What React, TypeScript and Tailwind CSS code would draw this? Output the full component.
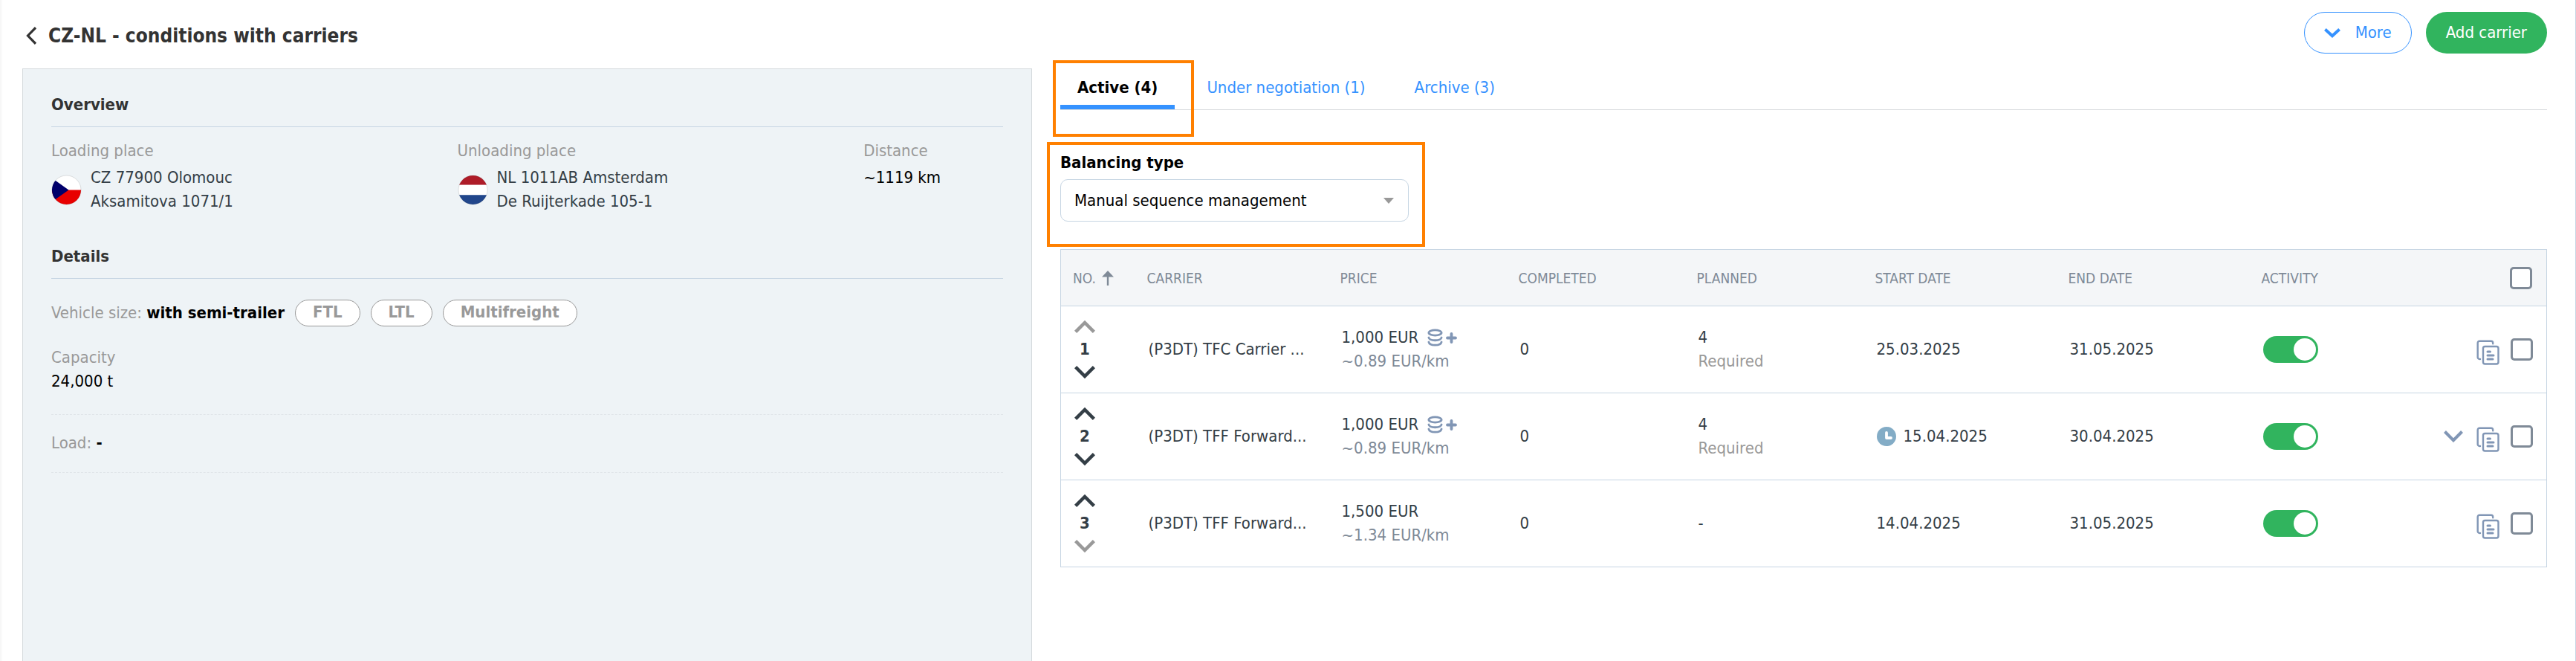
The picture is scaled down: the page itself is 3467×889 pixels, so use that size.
import React from "react";

const CHECK =
  "block h-[30px] w-[30px] shrink-0 appearance-none rounded-[5px] border-3 border-[#7f8a97] bg-white";

function Chevron({ dir, className }: { dir: "up" | "down"; className: string }) {
  return (
    <svg viewBox="0 0 28 17" className={className} fill="none" stroke="currentColor" strokeWidth="4.5" aria-hidden="true">
      <path d={dir === "up" ? "M1.6 15.4 14 3l12.4 12.4" : "M1.6 1.6 14 14 26.4 1.6"} />
    </svg>
  );
}

function Coins() {
  return (
    <svg viewBox="0 0 40 24" className="h-6 w-10 text-[#8196b5]" fill="none" stroke="currentColor" strokeWidth="2.8" strokeLinecap="round" aria-hidden="true">
      <ellipse cx="10.5" cy="5.5" rx="8.6" ry="3.6" />
      <path d="M1.9 12c1.2 5 16 5 17.200 0M1.900 18c1.200 5.600 16 5.600 17.200 0" />
      <path d="M32.500 7v11M27 12.500h11" strokeWidth="3.8" />
    </svg>
  );
}

function CopyIcon() {
  return (
    <svg viewBox="0 0 32 34" className="h-[34px] w-8" fill="none" stroke="#8196b5" strokeWidth="2.4" strokeLinecap="round" aria-hidden="true">
      <path d="M5 26H4.200a2.500 2.500 0 0 1-2.500-2.500V4.200a2.500 2.500 0 0 1 2.500-2.500h15.500a2.500 2.500 0 0 1 2.500 2.500v1" />
      <rect x="9" y="9" width="20.500" height="23.500" rx="2.500" />
      <path d="M15 16h3.500M15 21h8M15 26h7" strokeWidth="3" />
    </svg>
  );
}

function Place({ label, lines, flag }: { label: string; lines: string[]; flag: React.ReactNode }) {
  return (
    <div>
      <p className="text-[#999999]">{label}</p>
      <div className="mt-1 flex items-center gap-3">
        {flag}
        <p>
          {lines[0]}
          <br />
          {lines[1]}
        </p>
      </div>
    </div>
  );
}

function CzechFlag() {
  return (
    <svg viewBox="0 0 42 42" className="h-[41px] w-[41px]" role="img" aria-label="Czech Republic">
      <clipPath id="cz"><circle cx="21" cy="21" r="20" /></clipPath>
      <g clipPath="url(#cz)">
        <path fill="#fff" d="M0 0h42v21H0z" />
        <path fill="#e80000" d="M0 21h42v21H0z" />
        <path fill="#00006b" d="M0 4 24 21 0 38z" />
      </g>
      <circle cx="21" cy="21" r="20" fill="none" stroke="#000" strokeOpacity=".12" />
    </svg>
  );
}

function DutchFlag() {
  return (
    <svg viewBox="0 0 42 42" className="h-[41px] w-[41px]" role="img" aria-label="Netherlands">
      <clipPath id="nl"><circle cx="21" cy="21" r="20" /></clipPath>
      <g clipPath="url(#nl)">
        <path fill="#ae1c28" d="M0 0h42v14H0z" />
        <path fill="#fff" d="M0 14h42v14H0z" />
        <path fill="#21468b" d="M0 28h42v14H0z" />
      </g>
      <circle cx="21" cy="21" r="20" fill="none" stroke="#000" strokeOpacity=".12" />
    </svg>
  );
}

type Row = {
  no: number;
  carrier: string;
  price: string;
  perKm: string;
  extra: boolean;
  planned: string;
  required: boolean;
  start: string;
  scheduled: boolean;
  end: string;
};

const ROWS: Row[] = [
  { no: 1, carrier: "(P3DT) TFC Carrier ...", price: "1,000 EUR", perKm: "~0.89 EUR/km", extra: true, planned: "4", required: true, start: "25.03.2025", scheduled: false, end: "31.05.2025" },
  { no: 2, carrier: "(P3DT) TFF Forward...", price: "1,000 EUR", perKm: "~0.89 EUR/km", extra: true, planned: "4", required: true, start: "15.04.2025", scheduled: true, end: "30.04.2025" },
  { no: 3, carrier: "(P3DT) TFF Forward...", price: "1,500 EUR", perKm: "~1.34 EUR/km", extra: false, planned: "-", required: false, start: "14.04.2025", scheduled: false, end: "31.05.2025" },
];

const TD = "pl-[18px] whitespace-nowrap";

function CarrierRow({ row }: { row: Row }) {
  const first = row.no === 1;
  const last = row.no === ROWS.length;
  return (
    <tr className="h-[117px] border-t border-[#c6d5e3]">
      <td className={TD}>
        <div className="flex w-7 flex-col items-center">
          <button type="button" aria-label="Move up" disabled={first} className={first ? "text-[#999999]" : "text-[#343e46]"}>
            <Chevron dir="up" className="block h-[17px] w-7" />
          </button>
          <b className="my-[6px]">{row.no}</b>
          <button type="button" aria-label="Move down" disabled={last} className={last ? "text-[#999999]" : "text-[#343e46]"}>
            <Chevron dir="down" className="block h-[17px] w-7" />
          </button>
        </div>
      </td>
      <td className={TD}>{row.carrier}</td>
      <td className={TD}>
        <div className="flex items-center gap-3">
          {row.price}
          {row.extra && <Coins />}
        </div>
        <div className="text-[#7f8a97]">{row.perKm}</div>
      </td>
      <td className={TD}>0</td>
      <td className={TD}>
        <div>{row.planned}</div>
        {row.required && <div className="text-[#999999]">Required</div>}
      </td>
      <td className={TD}>
        <div className="flex items-center gap-[10px]">
          {row.scheduled && (
            <svg viewBox="0 0 26 26" className="h-[26px] w-[26px]" aria-hidden="true">
              <circle cx="13" cy="13" r="13" fill="#83acc6" />
              <path d="M13 8v7h6" fill="none" stroke="#fff" strokeWidth="3.8" strokeLinecap="round" strokeLinejoin="round" />
            </svg>
          )}
          {row.start}
        </div>
      </td>
      <td className={TD}>{row.end}</td>
      <td className={TD}>
        <div className="flex items-center">
          <label className="relative block h-9 w-[74px]">
            <input type="checkbox" defaultChecked aria-label={`Activity of carrier ${row.no}`} className="peer block h-9 w-[74px] appearance-none rounded-full bg-gray-300 checked:bg-[#31b45e]" />
            <span className="pointer-events-none absolute top-[3px] right-[3px] h-[30px] w-[30px] rounded-full bg-white" />
          </label>
          <div className="mr-[18px] ml-auto flex items-center gap-[14px]">
            {row.scheduled && (
              <button type="button" aria-label="Show details" className="mr-1 text-[#8196b5]">
                <Chevron dir="down" className="block h-4 w-[26px]" />
              </button>
            )}
            <button type="button" aria-label="Copy conditions" className="pt-2">
              <CopyIcon />
            </button>
            <input type="checkbox" aria-label={`Select carrier ${row.no}`} className={CHECK} />
          </div>
        </div>
      </td>
    </tr>
  );
}

const TAB = "h-[63px] px-[23px] pt-[10px] pb-[6px] text-[#3592ff]";
const TH = "pl-4 text-left font-normal uppercase";

export default function App() {
  return (
    <div className="flex min-h-screen flex-col border-r border-[#c6d5e3] bg-white bg-[linear-gradient(to_right,#f5f5f5,#ffffff_4px)] pr-[38px] pl-[30px] font-['DejaVu_Sans_Condensed','DejaVu_Sans',sans-serif] text-[22px] leading-8 text-[#343e46]">
      <header className="flex h-[92px] items-center justify-between">
        <div className="flex items-center gap-4 pt-1 pl-[5px]">
          <a href="#back" aria-label="Back" className="text-[#333333]">
            <svg viewBox="0 0 14 24" className="block h-6 w-[14px]" fill="none" stroke="currentColor" strokeWidth="3.2" aria-hidden="true">
              <path d="M13 1.200 2.500 12 13 22.800" />
            </svg>
          </a>
          <h1 className="text-[26px] leading-8 font-bold text-[#333333]">CZ-NL - conditions with carriers</h1>
        </div>
        <div className="flex gap-[19px] pb-1">
          <button type="button" className="flex h-14 items-center gap-5 rounded-full border border-[#3592ff] px-[26px] text-[#3592ff]">
            <svg viewBox="0 0 22 13" className="h-[13px] w-[22px]" fill="none" stroke="currentColor" strokeWidth="4" aria-hidden="true">
              <path d="M1.400 1.600 11 10.200l9.600-8.600" />
            </svg>
            More
          </button>
          <button type="button" className="h-14 rounded-full bg-[#31b45e] px-[27px] text-white">Add carrier</button>
        </div>
      </header>

      <main className="grid flex-1 grid-cols-[1359fr_2001fr] gap-[38px]">
        <section className="border border-b-0 border-[#d5dadd] bg-[#eef3f6] px-[38px] pt-8">
          <h2 className="border-b border-[#c6d5e3] pb-[13px] font-bold text-[#333333]">Overview</h2>
          <div className="grid grid-cols-[547fr_547fr_188fr] pt-4">
            <Place label="Loading place" lines={["CZ 77900 Olomouc", "Aksamitova 1071/1"]} flag={<CzechFlag />} />
            <Place label="Unloading place" lines={["NL 1011AB Amsterdam", "De Ruijterkade 105-1"]} flag={<DutchFlag />} />
            <div>
              <p className="text-[#999999]">Distance</p>
              <p className="mt-1 text-black">~1119 km</p>
            </div>
          </div>

          <h2 className="mt-[42px] border-b border-[#c6d5e3] pb-[13px] font-bold text-[#333333]">Details</h2>
          <div className="flex items-center gap-[14px] pt-7">
            <p className="text-[#999999]">
              Vehicle size: <b className="text-black">with semi-trailer</b>
            </p>
            {["FTL", "LTL", "Multifreight"].map((t) => (
              <span key={t} className="h-9 rounded-full border border-[#999999] bg-white px-[23px] font-bold text-[#999999]">
                {t}
              </span>
            ))}
          </div>
          <div className="border-b border-dashed border-[#e0e5e9] pt-[26px] pb-7">
            <p className="text-[#999999]">Capacity</p>
            <p className="text-black">24,000 t</p>
          </div>
          <p className="border-b border-dashed border-[#e0e5e9] pt-[22px] pb-[23px] text-[#999999]">
            Load: <b className="text-black">-</b>
          </p>
        </section>

        <section>
          <div className="relative -mt-2">
            <div role="tablist" className="flex gap-5 border-b border-[#d9dcdf]">
              <button type="button" role="tab" aria-selected="true" className="h-[63px] border-b-6 border-[#3592ff] px-[23px] pt-[10px] font-bold text-black">
                Active (4)
              </button>
              <button type="button" role="tab" aria-selected="false" className={TAB}>
                Under negotiation (1)
              </button>
              <button type="button" role="tab" aria-selected="false" className={TAB}>
                Archive (3)
              </button>
            </div>
            <div className="pointer-events-none absolute -top-[3px] -left-[10px] h-[103px] w-[190px] border-4 border-[#ff8000]" />
          </div>

          <div className="relative w-[469px] pt-[55px]">
            <div className="pointer-events-none absolute top-[43px] -left-[18px] h-[141px] w-[509px] border-4 border-[#ff8000]" />
            <label htmlFor="balancing" className="block font-bold text-black">
              Balancing type
            </label>
            <div className="relative mt-[6px]">
              <select id="balancing" className="h-[57px] w-full appearance-none rounded-[10px] border border-[#c6d5e3] bg-white px-[18px] text-black">
                <option>Manual sequence management</option>
              </select>
              <svg viewBox="0 0 14 8" className="pointer-events-none absolute top-[25px] right-5 h-2 w-[14px] fill-[#999999]" aria-hidden="true">
                <path d="M0 0h14L7 8z" />
              </svg>
            </div>
          </div>

          <table className="mt-[37px] w-full table-fixed border-collapse border border-[#c6d5e3]">
            <colgroup>
              <col className="w-[5%]" />
              <col className="w-[13%]" />
              <col className="w-[12%]" />
              <col className="w-[12%]" />
              <col className="w-[12%]" />
              <col className="w-[13%]" />
              <col className="w-[13%]" />
              <col className="w-[20%]" />
            </colgroup>
            <thead className="bg-[#f4f6f8] text-[19px] text-[#7f8a97]">
              <tr className="h-[76px]">
                <th className={TH}>
                  <span className="flex items-center gap-2">
                    No.
                    <svg viewBox="0 0 16 20" className="h-5 w-4" fill="currentColor" aria-hidden="true">
                      <path d="M8 0l8 8.500H9.200V20H6.800V8.500H0z" />
                    </svg>
                  </span>
                </th>
                <th className={TH}>Carrier</th>
                <th className={TH}>Price</th>
                <th className={TH}>Completed</th>
                <th className={TH}>Planned</th>
                <th className={TH}>Start date</th>
                <th className={TH}>End date</th>
                <th className={TH}>
                  <span className="flex items-center justify-between pr-[19px]">
                    Activity
                    <input type="checkbox" aria-label="Select all carriers" className={CHECK} />
                  </span>
                </th>
              </tr>
            </thead>
            <tbody>
              {ROWS.map((r) => (
                <CarrierRow key={r.no} row={r} />
              ))}
            </tbody>
          </table>
        </section>
      </main>
    </div>
  );
}
